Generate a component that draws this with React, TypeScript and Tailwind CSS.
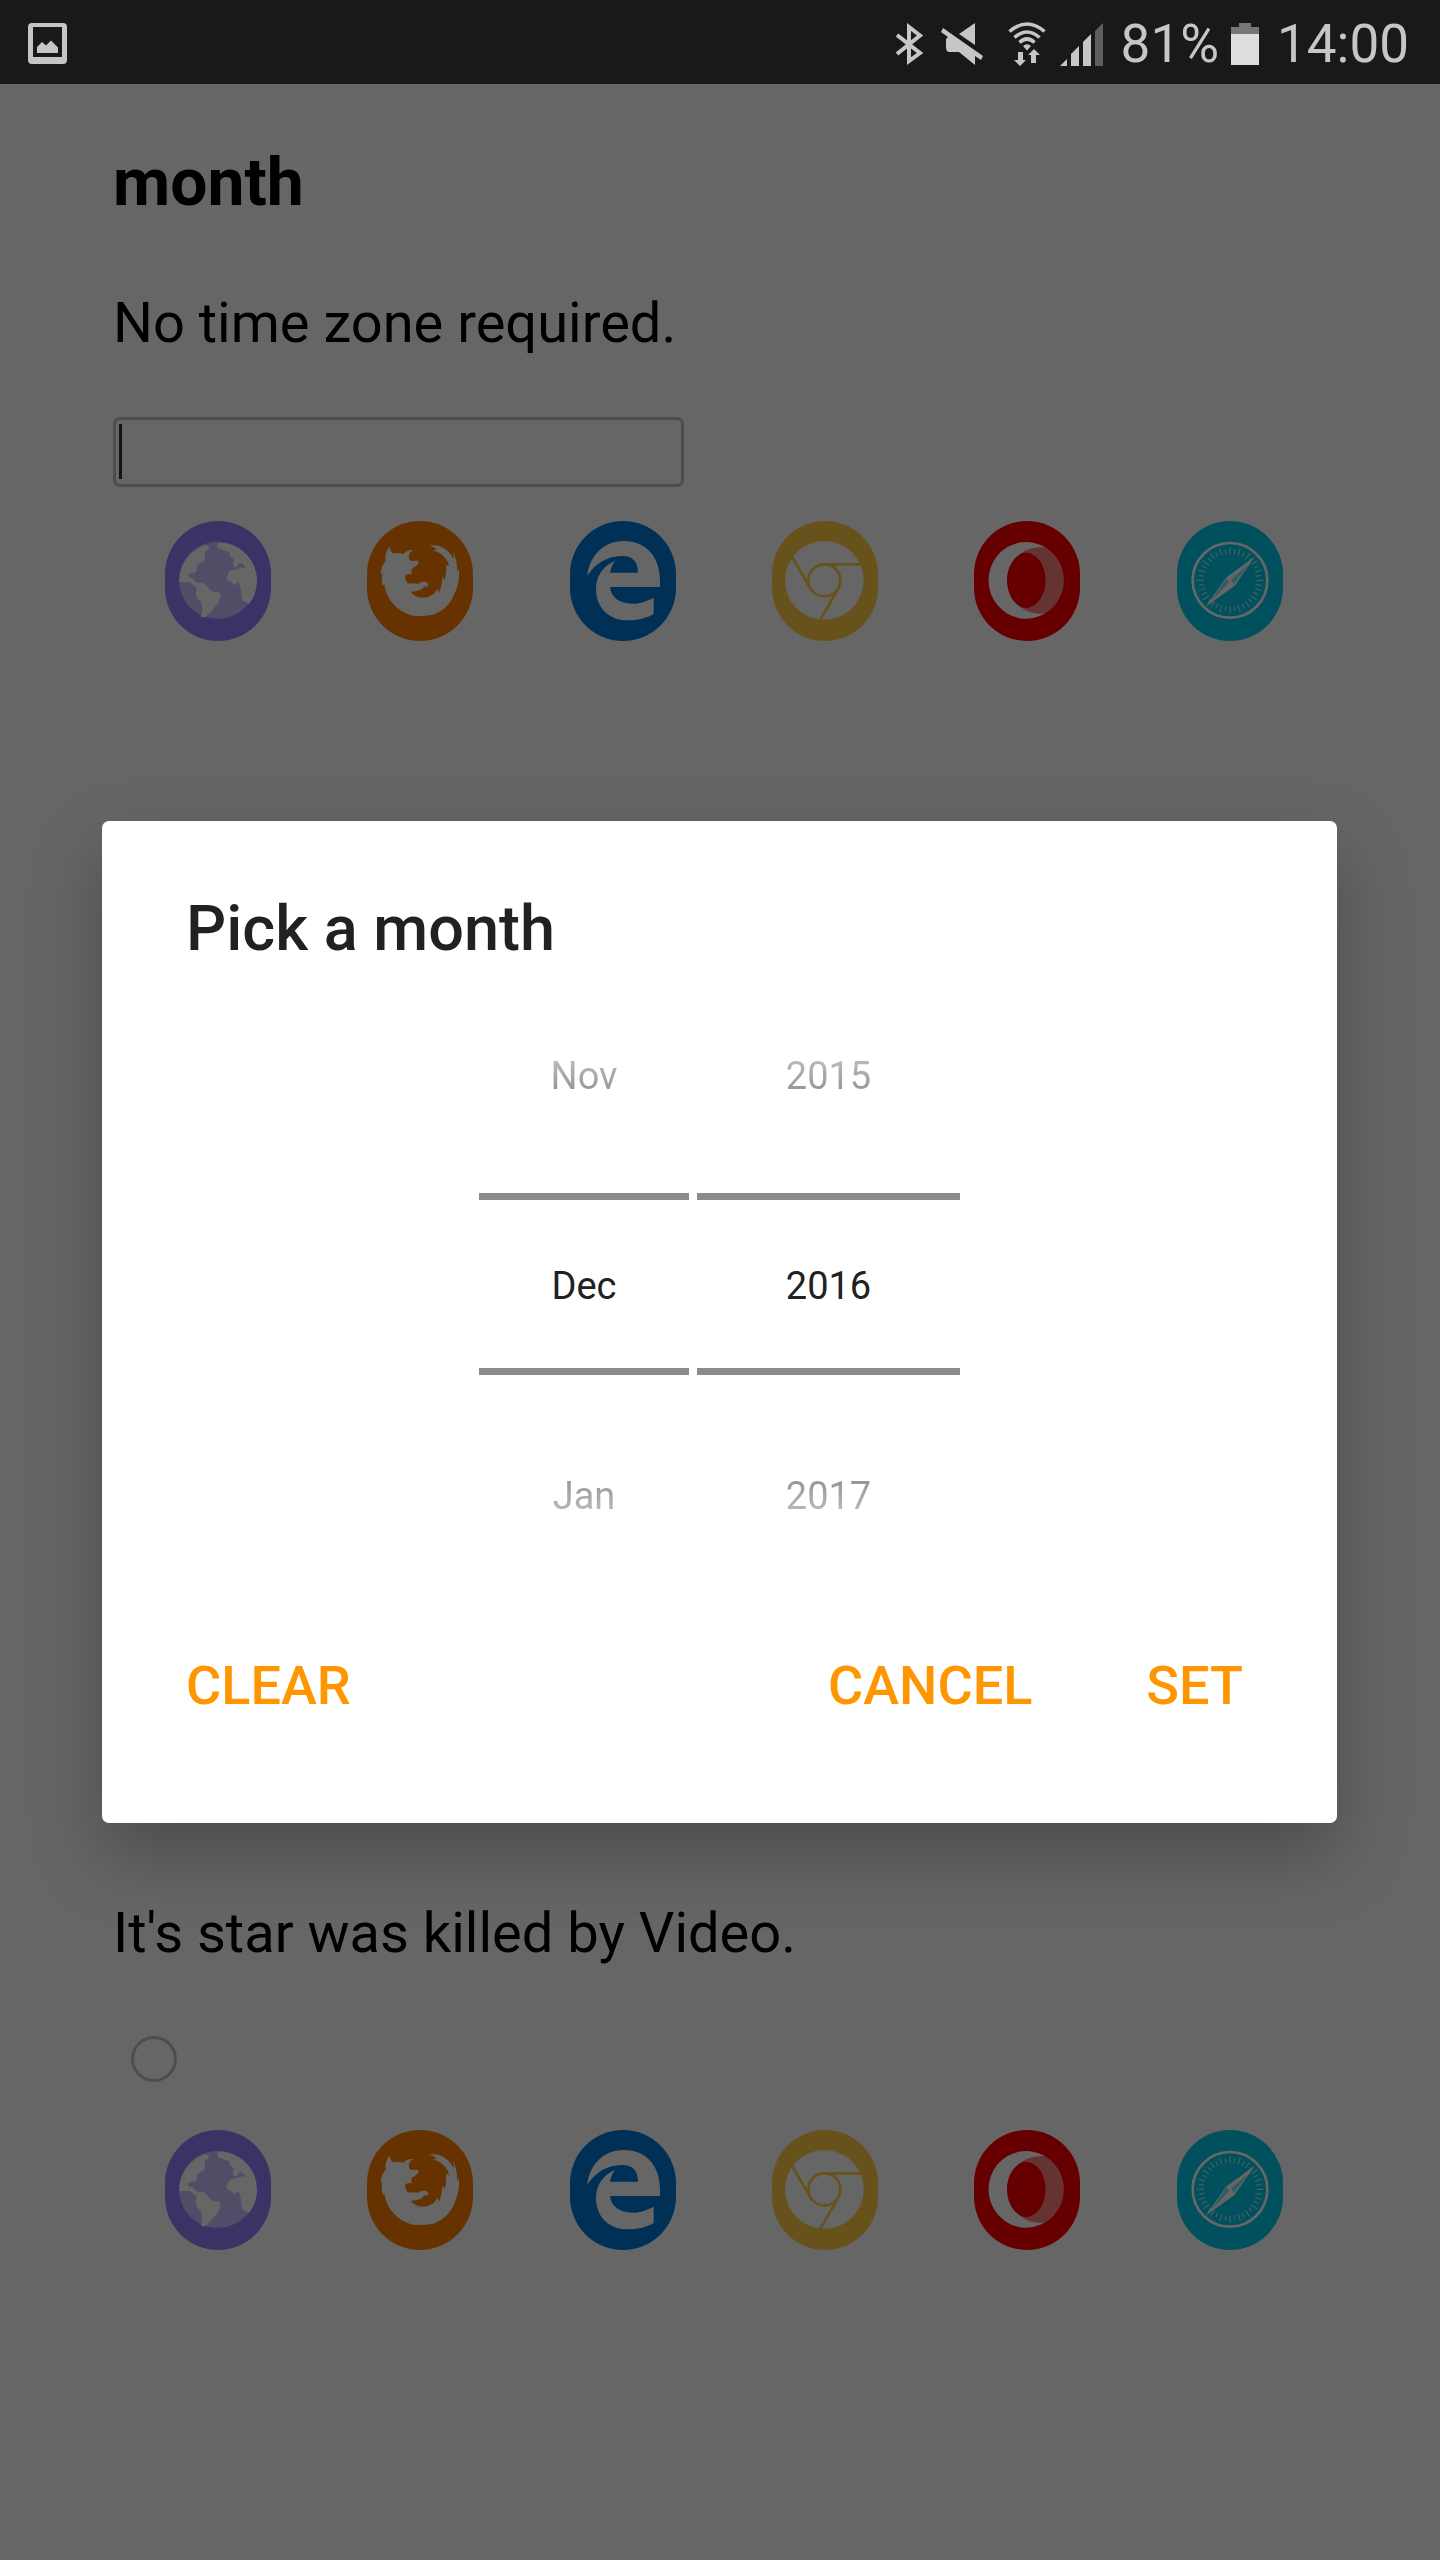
import { useState } from "react";
import type { ReactNode } from "react";

function PictureIcon() {
  return (
    <svg viewBox="0 0 39 42" className="h-[42px] w-[39px]" aria-hidden="true">
      <path
        fillRule="evenodd"
        fill="#c6c4c6"
        d="M4 0h31a4 4 0 0 1 4 4v33a4 4 0 0 1-4 4H4a4 4 0 0 1-4-4V4a4 4 0 0 1 4-4zM5 4v30h29V4z"
      />
      <path fill="#c6c6c6" d="M9 30v-6l5-5 4 3.500 5-5 7 7v5.500z" />
    </svg>
  );
}

function BluetoothIcon() {
  return (
    <svg viewBox="0 0 28 42" className="h-[42px] w-[28px]" aria-hidden="true">
      <path
        fill="none"
        stroke="#c6c6c6"
        strokeWidth="4"
        d="M1 12l23 18-11 8V4l11 8.500L1 31"
      />
    </svg>
  );
}

function MuteIcon() {
  return (
    <svg viewBox="0 0 42 42" className="h-[42px] w-[42px]" aria-hidden="true">
      <g fill="#c6c6c6">
        <path d="M34 0v22L18 11z" />
        <path d="M2 5l40 28-2 4-6-4v9L18 29H9c-3 0-4-2-4-5v-8l2-2-7-5z" />
      </g>
    </svg>
  );
}

function WifiIcon() {
  return (
    <svg viewBox="0 0 38 44" className="h-[44px] w-[38px]" aria-hidden="true">
      <g fill="none" stroke="#c6c6c6" strokeWidth="3.600">
        <path d="M1.500 9.500Q19-5.500 36.500 9.500" />
        <path d="M6.500 15.500Q19 4.500 31.500 15.500" />
        <path d="M11.500 20.500Q19 13.500 26.500 20.500" />
      </g>
      <g fill="#c6c6c6">
        <path d="M15 24q4-3.500 8 0l-4 4.500z" />
        <path d="M10 30h5v8h3l-6 6-6-6h4z" />
        <path d="M23 41v-8h-3l6-6 6 6h-4v8z" />
      </g>
    </svg>
  );
}

function SignalIcon() {
  return (
    <svg viewBox="0 0 43 43" className="h-[43px] w-[43px]" aria-hidden="true">
      <g fill="#c6c6c6">
        <path d="M0 43l7-7v7z" />
        <path d="M11 43V31l8-8v20z" />
        <path d="M23 43V19l8-8v32z" />
      </g>
      <path fill="#5d5e60" d="M35 43V8l8-8v43z" />
    </svg>
  );
}

function BatteryIcon() {
  return (
    <svg viewBox="0 0 28 42" className="h-[42px] w-[28px]" aria-hidden="true">
      <path fill="#757779" d="M8 0h12v4h8v7H0V4h8z" />
      <path fill="#dcdedd" d="M0 11h28v31H0z" />
    </svg>
  );
}

function StatusBar() {
  return (
    <header className="flex h-[84px] items-center justify-between bg-[#18191b] pt-1 pr-[31px] pl-[28px] text-[53px] leading-none text-[#c6c6c6]">
      <PictureIcon />
      <div className="flex items-center">
        <BluetoothIcon />
        <span className="ml-[17px] flex">
          <MuteIcon />
        </span>
        <span className="ml-[25px] flex">
          <WifiIcon />
        </span>
        <span className="ml-[14px] flex">
          <SignalIcon />
        </span>
        <span className="ml-[18px]">81%</span>
        <span className="ml-[12px] flex">
          <BatteryIcon />
        </span>
        <time className="ml-[18px]">14:00</time>
      </div>
    </header>
  );
}

const TICKS = Array.from({ length: 40 }, (_, i) => i);

type Browser = { name: string; color: string; viewBox: string; art: ReactNode };

const BROWSERS: Browser[] = [
  {
    name: "Android Browser",
    color: "bg-[#997dff]",
    viewBox: "45 33 318 360",
    art: (
      <g fill="#fff">
        <circle cx="203" cy="211" r="116" opacity=".5" />
        <path d="M88 216C88 165 117 122 168 104L178 112 174 121 166 122 164 140 162 155 151 158 141 168 140 182 134 188 120 189 114 195 115 202 129 204 133 213 142 218 160 218 171 228 180 240 190 245 206 247 212 254 210 266 204 279 186 302 165 322 156 322 153 317 157 300 154 277 140 264 137 250 140 238 137 230 119 216z" />
        <path d="M203 98A114 114 0 0 1 297 282L288 277 276 269 274 250 269 224 264 216 257 222 251 225 244 217 233 211 230 203 237 184 248 179 262 178 272 172 282 175 285 168 276 160 266 161 261 171 252 171 248 163 252 149 240 139 238 126 220 121 203 113z" />
      </g>
    ),
  },
  {
    name: "Firefox",
    color: "bg-[#ff8000]",
    viewBox: "652 33 318 360",
    art: (
      <path
        fill="#fff"
        d="M719 110L723 123 731 130Q745 127 762 131Q772 118 791 120L781 127 777 138 779 149 785 153 806 152Q811 157 800 167L785 178 786 193Q770 189 766 200Q766 214 778 221L790 220 806 221 815 215 830 216Q841 224 833 230L824 229Q814 245 783 245Q794 262 820 263Q850 262 864 236L867 249Q877 232 878 201L885 209Q891 190 889 164L898 169Q893 145 877 135Q864 122 848 123L862 118Q853 109 838 107Q872 100 897 126Q908 136 911 148L913 139 908 124Q922 142 923 186L928 177Q931 215 917 245Q898 298 850 314L822 318 790 317Q754 309 731 282Q709 258 704 224L700 227Q693 213 698 190L693 193Q694 168 708 152Q704 130 719 110z"
      />
    ),
  },
  {
    name: "Edge",
    color: "bg-[#0078d7]",
    viewBox: "57 33 318 360",
    art: (
      <path
        fill="#fff"
        d="M109 197C115 140 155 93 218 93C290 93 327 145 327 212V231H177C180 262 205 281 245 281C270 281 288 273 308 263V312C288 324 260 331 230 331C170 331 135 290 135 237C135 195 160 165 193 152C185 160 179 175 177 188H261C261 155 245 138 212 138C165 138 130 165 109 197z"
      />
    ),
  },
  {
    name: "Chrome",
    color: "bg-[#ffcd41]",
    viewBox: "667 33 318 360",
    art: (
      <>
        <circle cx="824" cy="211" r="118" fill="#fff" />
        <g fill="none" stroke="#ffcd41" strokeWidth="8">
          <circle cx="824" cy="211" r="48" />
          <path d="M824 163H944M782 235L724 135M866 235L809 334" />
        </g>
      </>
    ),
  },
  {
    name: "Opera",
    color: "bg-[#ff0000]",
    viewBox: "73 33 318 360",
    art: (
      <g fill="#fff">
        <path d="M287 112A113 115 0 1 0 287 310C255 312 235 307 213 291C187 277 172 245 172 211C172 177 187 147 213 131C235 115 260 112 287 112z" />
        <path
          opacity=".5"
          d="M287 112A113 115 0 0 1 287 310C255 312 235 307 213 291A59 83 0 1 0 213 131C235 115 260 112 287 112z"
        />
      </g>
    ),
  },
  {
    name: "Safari",
    color: "bg-[#04c8ea]",
    viewBox: "679 33 318 360",
    art: (
      <>
        <circle cx="838" cy="211" r="112" fill="none" stroke="#fff" strokeWidth="8" />
        <g stroke="#fff" strokeWidth="3" opacity=".8">
          {TICKS.map((i) => (
            <line
              key={i}
              x1="838"
              x2="838"
              y1={i % 2 ? 117 : 111}
              y2="132"
              transform={`rotate(${i * 9} 838 211)`}
            />
          ))}
        </g>
        <path fill="#fff" d="M912 140L852 227 765 290 826 203z" />
        <path fill="#04c8ea" opacity=".5" d="M892 166L849 222 841 208zM782 272L826 206 836 216z" />
      </>
    ),
  },
];

function BrowserRow() {
  return (
    <ul className="grid grid-cols-6">
      {BROWSERS.map((b) => (
        <li key={b.name} className="pl-[52px]">
          <span className={`block h-[120px] w-[106px] overflow-hidden rounded-full ${b.color}`}>
            <svg viewBox={b.viewBox} className="h-full w-full" role="img" aria-label={b.name}>
              {b.art}
            </svg>
          </span>
        </li>
      ))}
    </ul>
  );
}

type WheelProps = {
  label: string;
  width: string;
  previous: string;
  value: string;
  next: string;
};

function Wheel({ label, width, previous, value, next }: WheelProps) {
  const [current, setCurrent] = useState(value);
  return (
    <div className={`flex flex-col text-center text-[38px] leading-[42px] ${width}`}>
      <button
        type="button"
        className="mb-[96px] bg-gradient-to-b from-[#c0c0c0] to-[#909090] bg-clip-text text-transparent"
      >
        {previous}
      </button>
      <input
        aria-label={label}
        value={current}
        onChange={(e) => setCurrent(e.target.value)}
        className="h-[182px] w-full border-y-[7px] border-[#8a8a8a] bg-transparent pt-[4px] text-center text-[#212121] outline-none"
      />
      <button
        type="button"
        className="mt-[100px] bg-gradient-to-b from-[#909090] to-[#c0c0c0] bg-clip-text text-transparent"
      >
        {next}
      </button>
    </div>
  );
}

function MonthDialog() {
  return (
    <div
      role="dialog"
      aria-labelledby="dialog-title"
      className="mr-[103px] ml-[102px] w-full rounded-[7px] bg-white pt-[72px] pb-[105px] shadow-[0_32px_72px_rgba(0,0,0,0.26)]"
    >
      <h2 id="dialog-title" className="px-[84px] text-[63px] leading-[72px] font-medium text-[#212121]">
        Pick a month
      </h2>
      <div className="mt-[90px] flex justify-center gap-2">
        <Wheel label="Month" width="w-[210px]" previous="Nov" value="Dec" next="Jan" />
        <Wheel label="Year" width="w-[263px]" previous="2015" value="2016" next="2017" />
      </div>
      <div className="mt-[137px] flex pr-[94px] pl-[84px] text-[54px] leading-[64px] font-medium text-[#ff9500]">
        <button type="button" className="mr-auto">
          CLEAR
        </button>
        <button type="button" className="mr-[114px]">
          CANCEL
        </button>
        <button type="button">SET</button>
      </div>
    </div>
  );
}

export default function App() {
  return (
    <div className="flex min-h-screen flex-col bg-white font-[Roboto,sans-serif]">
      <StatusBar />
      <main className="relative flex-1 px-[113px] pt-[59px] text-black">
        <section>
          <h1 className="text-[66px] leading-[80px] font-bold">
            <label htmlFor="month-field">month</label>
          </h1>
          <p className="mt-[64px] text-[56px] leading-[72px]">No time zone required.</p>
          <div className="relative mt-[58px] w-[571px]">
            <input
              id="month-field"
              type="text"
              className="block h-[70px] w-full rounded-[7px] border-[3px] border-[#c0c0c0] bg-white px-[6px] text-[48px] outline-none"
            />
            <span className="absolute top-[7px] left-[6px] h-[55px] w-[3px] bg-[#333]" />
          </div>
          <div className="mt-[34px]">
            <BrowserRow />
          </div>
        </section>
        <section className="mt-[1256px]">
          <p id="radio-text" className="text-[56px] leading-[72px]">
            It&apos;s star was killed by Video.
          </p>
          <input
            type="radio"
            aria-labelledby="radio-text"
            className="mt-[67px] ml-[18px] block size-[46px] appearance-none rounded-full border-[3px] border-[#c0c0c0]"
          />
          <div className="mt-[48px]">
            <BrowserRow />
          </div>
        </section>
        <div className="absolute inset-0 flex items-center bg-black/60">
          <MonthDialog />
        </div>
      </main>
    </div>
  );
}
